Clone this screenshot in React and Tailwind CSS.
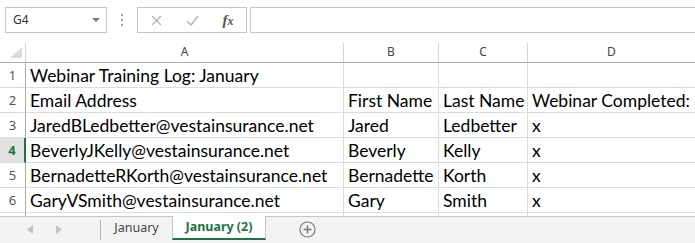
import React from "react";

const rows = [
  { n: 1, a: "Webinar Training Log: January", b: "", c: "", d: "" },
  { n: 2, a: "Email Address", b: "First Name", c: "Last Name", d: "Webinar Completed:" },
  { n: 3, a: "JaredBLedbetter@vestainsurance.net", b: "Jared", c: "Ledbetter", d: "x" },
  { n: 4, a: "BeverlyJKelly@vestainsurance.net", b: "Beverly", c: "Kelly", d: "x" },
  { n: 5, a: "BernadetteRKorth@vestainsurance.net", b: "Bernadette", c: "Korth", d: "x" },
  { n: 6, a: "GaryVSmith@vestainsurance.net", b: "Gary", c: "Smith", d: "x" },
];

const ui = { fontFamily: '"Noto Sans", "Open Sans", sans-serif' };
const cellFont = { fontFamily: 'Lato, "Open Sans", sans-serif' };

function Cell({ children, last }) {
  return (
    <div
      className={`h-[25px] border-b border-[#dadcdd] ${last ? "" : "border-r"} flex items-end pl-[4px] pb-[1px] text-[17.5px] leading-[20px] text-black whitespace-nowrap overflow-visible`}
      style={cellFont}
    >
      {children}
    </div>
  );
}

export default function App() {
  return (
    <div className="w-[695px] h-[243px] bg-white overflow-hidden flex flex-col" style={ui}>
      {/* Formula bar */}
      <div className="h-[43px] flex items-start pt-[7px] shrink-0">
        <div className="ml-[5px] w-[102px] h-[26px] border border-[#c6c6c6] flex items-center justify-between pl-[7px] pr-[6px]">
          <span className="text-[12px] text-[#333]">G4</span>
          <svg width="8" height="5" viewBox="0 0 8 5">
            <polygon points="0,0 8,0 4,4" fill="#7a7a7a" />
          </svg>
        </div>
        <div className="w-[30px] h-[26px] flex items-center justify-center">
          <svg width="3" height="12" viewBox="0 0 3 12">
            <rect x="0" y="0" width="2" height="2" fill="#a6a6a6" />
            <rect x="0" y="5" width="2" height="2" fill="#a6a6a6" />
            <rect x="0" y="10" width="2" height="2" fill="#a6a6a6" />
          </svg>
        </div>
        <div className="w-[110px] h-[26px] border border-[#c6c6c6] flex items-center">
          <div className="w-[36px] flex justify-center pl-[1px]">
            <svg width="11" height="11" viewBox="0 0 11 11">
              <path d="M1 1 L10 10 M10 1 L1 10" stroke="#b5b5b5" strokeWidth="1.3" fill="none" />
            </svg>
          </div>
          <div className="w-[36px] flex justify-center">
            <svg width="13" height="11" viewBox="0 0 13 11">
              <path d="M1 6 L5 10 L12 1" stroke="#b5b5b5" strokeWidth="1.5" fill="none" />
            </svg>
          </div>
          <div className="w-[36px] flex justify-center">
            <span
              className="text-[15px] italic font-bold text-[#555] leading-none"
              style={{ fontFamily: '"Liberation Serif", serif' }}
            >
              f<span className="text-[12px]">x</span>
            </span>
          </div>
        </div>
        <div className="ml-[3px] flex-1 h-[26px] border border-r-0 border-[#c6c6c6]" />
      </div>

      {/* Grid */}
      <div className="grid grid-cols-[26px_318px_95px_89px_1fr] shrink-0">
        {/* header row */}
        <div className="h-[20px] border-b border-r border-b-[#ababab] border-r-[#d4d4d4] relative">
          <svg className="absolute left-[10px] top-[4px]" width="12" height="11" viewBox="0 0 12 11">
            <polygon points="12,0 12,11 0,11" fill="#dcdcdc" />
          </svg>
        </div>
        {["A", "B", "C", "D"].map((l, i) => (
          <div
            key={l}
            className={`h-[20px] border-b border-b-[#ababab] ${i < 3 ? "border-r border-r-[#d4d4d4]" : ""} flex items-center justify-center text-[12px] text-[#444] pb-[1px]`}
          >
            {l}
          </div>
        ))}

        {rows.map((r) => {
          const sel = r.n === 4;
          return (
            <React.Fragment key={r.n}>
              <div
                className={`h-[25px] border-b border-b-[#dadcdd] ${
                  sel ? "bg-[#e1e1e1] border-r-2 border-r-[#217346] text-[#217346] font-bold" : "border-r border-r-[#ababab] text-[#555]"
                } flex items-end justify-center pb-[4px] text-[13px] leading-[16px]`}
              >
                {r.n}
              </div>
              <Cell>{r.a}</Cell>
              <Cell>{r.b}</Cell>
              <Cell>{r.c}</Cell>
              <Cell last>{r.d}</Cell>
            </React.Fragment>
          );
        })}
        {/* partial row */}
        <div className="h-[3px] border-r border-r-[#ababab]" />
        <div className="h-[3px] border-r border-[#dadcdd]" />
        <div className="h-[3px] border-r border-[#dadcdd]" />
        <div className="h-[3px] border-r border-[#dadcdd]" />
        <div className="h-[3px]" />
      </div>

      {/* Sheet tabs */}
      <div className="flex-1 bg-[#f3f3f3] border-t border-[#c6c6c6] flex items-start">
        <div className="w-[100px] h-[24px] flex items-center">
          <svg className="ml-[27px]" width="6" height="9" viewBox="0 0 6 9">
            <polygon points="6,0 6,9 0,4.5" fill="#c3c3c3" />
          </svg>
          <svg className="ml-[23px]" width="6" height="9" viewBox="0 0 6 9">
            <polygon points="0,0 0,9 6,4.5" fill="#c3c3c3" />
          </svg>
        </div>
        <div className="w-px h-[20px] mt-[3px] bg-[#b5b5b5]" />
        <div className="w-[71px] h-[23px] flex items-center justify-center text-[12.5px] text-[#444]">
          January
        </div>
        <div className="w-[94px] h-[24px] bg-white border-l border-r border-[#c6c6c6] border-b-2 border-b-[#217346] -mt-px flex items-center justify-center text-[12.5px] font-bold text-[#217346]">
          January (2)
        </div>
        <div className="w-[82px] h-[24px] flex items-center justify-center">
          <svg width="17" height="17" viewBox="0 0 17 17">
            <circle cx="8.5" cy="8.5" r="7.5" stroke="#7a7a7a" strokeWidth="1.2" fill="none" />
            <path d="M8.5 4.5 V12.5 M4.5 8.5 H12.5" stroke="#7a7a7a" strokeWidth="1.6" />
          </svg>
        </div>
      </div>
    </div>
  );
}
